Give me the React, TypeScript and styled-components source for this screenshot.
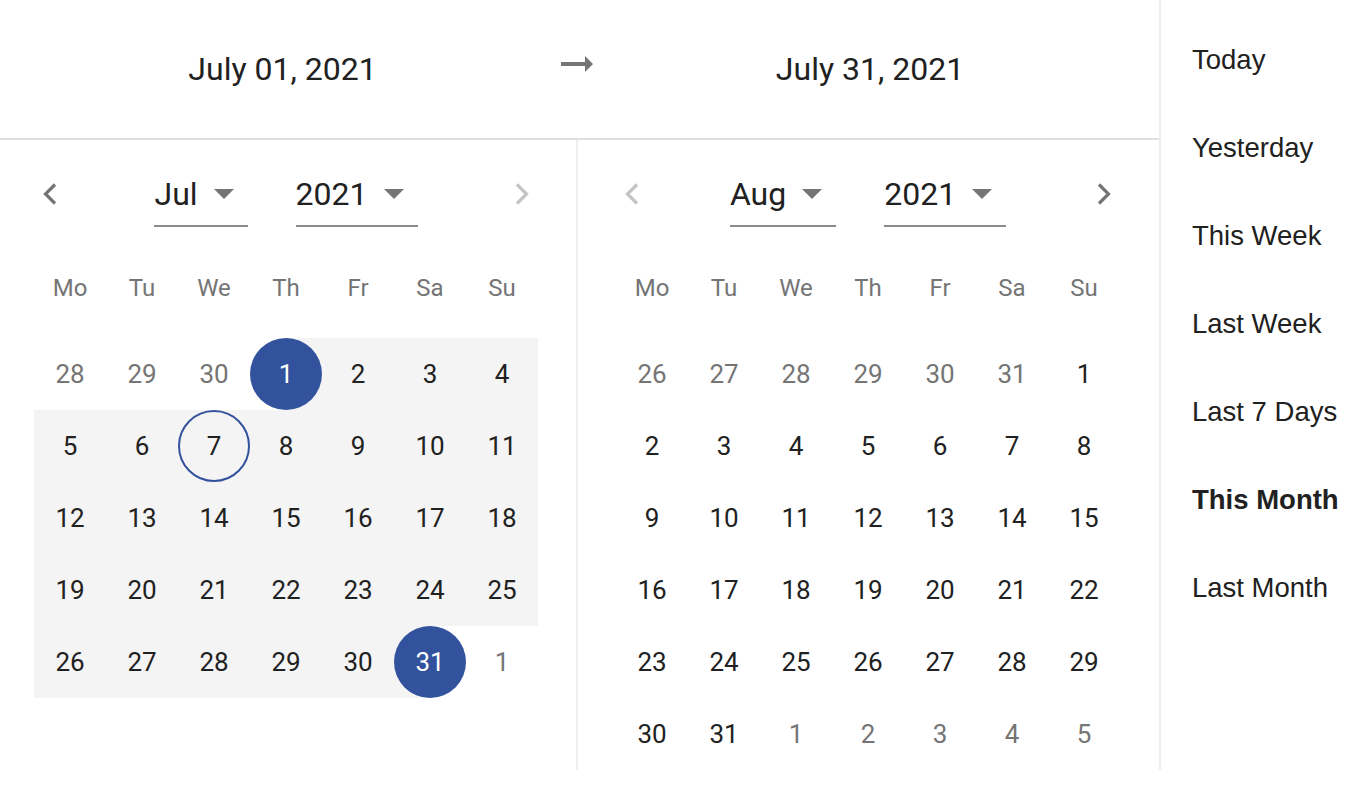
import React from 'react'
import styled, { createGlobalStyle, css } from 'styled-components'

const GlobalStyle = createGlobalStyle`
  html, body {
    margin: 0;
    padding: 0;
    background: #ffffff;
  }
  body {
    font-family: Roboto, "Noto Sans", sans-serif;
    color: #212121;
  }
`;

const BLUE = '#33529e';
const RANGE_BG = '#f4f4f4';

const Page = styled.div`
  display: flex;
  width: 1362px;
`;

const Main = styled.div`
  width: 1159px;
  display: flex;
  flex-direction: column;
`;

const Header = styled.div`
  display: grid;
  grid-template-columns: 1fr 48px 1fr;
  height: 138px;
  padding-right: 5px;
  border-bottom: 2px solid #e0e0e0;
`;

const DateLabel = styled.div<{ $side: 'start' | 'end' }>`
  display: flex;
  align-items: center;
  justify-content: center;
  font-size: 32px;
  color: #212121;
  padding-left: ${p => (p.$side === 'start' ? '12px' : '0')};
  padding-right: ${p => (p.$side === 'end' ? '15px' : '0')};
`;

const ArrowIcon = styled.svg`
  align-self: start;
  margin-top: 40px;
  width: 48px;
  height: 48px;
  fill: #757575;
`;

const Calendars = styled.div`
  display: flex;
  flex: 1;
`;

const Panel = styled.div<{ $inset: number; $divider?: boolean }>`
  display: flex;
  flex-direction: column;
  width: ${p => (p.$divider ? '578px' : 'auto')};
  flex: ${p => (p.$divider ? '0 0 auto' : '1')};
  padding-left: ${p => p.$inset}px;
  box-sizing: border-box;
  border-right: ${p => (p.$divider ? '2px solid #eeeeee' : 'none')};
`;

const NavRow = styled.div`
  width: 504px;
  margin-top: 34px;
  display: flex;
  justify-content: space-between;
  align-items: flex-start;
`;

const NavButton = styled.div<{ $disabled?: boolean }>`
  width: 32px;
  height: 40px;
  display: flex;
  align-items: center;
  justify-content: center;
  color: ${p => (p.$disabled ? '#c4c4c4' : '#757575')};
  cursor: ${p => (p.$disabled ? 'default' : 'pointer')};
`;

const SelectGroup = styled.div`
  display: flex;
  gap: 48px;
`;

const Select = styled.div`
  display: flex;
  align-items: center;
  height: 40px;
  padding-bottom: 11px;
  padding-right: 14px;
  border-bottom: 2px solid #8c8c8c;
  font-size: 32px;
  color: #212121;
`;

const Caret = styled.svg`
  width: 20px;
  height: 10px;
  margin-left: 16px;
  fill: #757575;
`;

const Grid = styled.div`
  width: 504px;
  display: grid;
  grid-template-columns: repeat(7, 72px);
`;

const WeekHeader = styled(Grid)`
  margin-top: 25px;
  margin-bottom: 14px;
`;

const WeekDay = styled.div`
  height: 72px;
  display: flex;
  align-items: center;
  justify-content: center;
  font-size: 24px;
  color: #757575;
`;

type Edge = 'start' | 'end' | 'mid' | undefined;

const Cell = styled.div<{ $range: Edge }>`
  height: 72px;
  display: flex;
  align-items: center;
  justify-content: center;
  ${p =>
    p.$range === 'mid' &&
    css`
      background: ${RANGE_BG};
    `}
  ${p =>
    p.$range === 'start' &&
    css`
      background: linear-gradient(to right, transparent 50%, ${RANGE_BG} 50%);
    `}
  ${p =>
    p.$range === 'end' &&
    css`
      background: linear-gradient(to right, ${RANGE_BG} 50%, transparent 50%);
    `}
`;

const Day = styled.div<{ $muted?: boolean; $selected?: boolean; $today?: boolean }>`
  width: 72px;
  height: 72px;
  box-sizing: border-box;
  border-radius: 50%;
  display: flex;
  align-items: center;
  justify-content: center;
  font-size: 26px;
  color: ${p => (p.$selected ? '#ffffff' : p.$muted ? '#757575' : '#212121')};
  background: ${p => (p.$selected ? BLUE : 'transparent')};
  border: ${p => (p.$today ? `2px solid ${BLUE}` : 'none')};
`;

const Sidebar = styled.div`
  width: 201px;
  border-left: 2px solid #eeeeee;
  padding-top: 16px;
  padding-left: 31px;
  box-sizing: border-box;
  font-family: "Liberation Sans", Arial, sans-serif;
`;

const Preset = styled.div<{ $active?: boolean }>`
  height: 88px;
  display: flex;
  align-items: center;
  font-size: 27.5px;
  color: #212121;
  font-weight: ${p => (p.$active ? 700 : 400)};
  white-space: nowrap;
  cursor: pointer;
`;

type DayCell = {
  day: number;
  muted?: boolean;
  selected?: boolean;
  today?: boolean;
  range?: Edge;
};

const WEEKDAYS = ['Mo', 'Tu', 'We', 'Th', 'Fr', 'Sa', 'Su'];

function buildMonth(
  year: number,
  month: number,
  opts: { rangeStart?: number; rangeEnd?: number; today?: number }
): DayCell[] {
  const first = new Date(year, month, 1);
  const offset = (first.getDay() + 6) % 7;
  const daysIn = new Date(year, month + 1, 0).getDate();
  const prevDays = new Date(year, month, 0).getDate();
  const cells: DayCell[] = [];

  for (let i = offset - 1; i >= 0; i--) {
    cells.push({ day: prevDays - i, muted: true });
  }
  for (let d = 1; d <= daysIn; d++) {
    const cell: DayCell = { day: d };
    const { rangeStart, rangeEnd } = opts;
    if (rangeStart && rangeEnd && d >= rangeStart && d <= rangeEnd) {
      cell.range = d === rangeStart ? 'start' : d === rangeEnd ? 'end' : 'mid';
      if (d === rangeStart || d === rangeEnd) cell.selected = true;
    }
    if (opts.today === d) cell.today = true;
    cells.push(cell);
  }
  let next = 1;
  while (cells.length % 7 !== 0) {
    cells.push({ day: next++, muted: true });
  }
  return cells;
}

function ChevronIcon({ dir }: { dir: 'left' | 'right' }) {
  return (
    <svg width="16" height="24" viewBox="0 0 16 24" fill="none">
      <polyline
        points={dir === 'left' ? '13,2.5 3.5,12 13,21.5' : '3,2.5 12.5,12 3,21.5'}
        stroke="currentColor"
        strokeWidth="3.2"
      />
    </svg>
  );
}

function Dropdown({ label }: { label: string }) {
  return (
    <Select>
      {label}
      <Caret viewBox="0 0 20 10">
        <path d="M0 0 L10 10 L20 0 Z" />
      </Caret>
    </Select>
  );
}

type MonthProps = {
  month: string;
  year: string;
  cells: DayCell[];
  prevDisabled?: boolean;
  nextDisabled?: boolean;
  inset: number;
  divider?: boolean;
};

function MonthPanel({ month, year, cells, prevDisabled, nextDisabled, inset, divider }: MonthProps) {
  return (
    <Panel $inset={inset} $divider={divider}>
      <NavRow>
        <NavButton $disabled={prevDisabled}>
          <ChevronIcon dir="left" />
        </NavButton>
        <SelectGroup>
          <Dropdown label={month} />
          <Dropdown label={year} />
        </SelectGroup>
        <NavButton $disabled={nextDisabled}>
          <ChevronIcon dir="right" />
        </NavButton>
      </NavRow>
      <WeekHeader>
        {WEEKDAYS.map(w => (
          <WeekDay key={w}>{w}</WeekDay>
        ))}
      </WeekHeader>
      <Grid>
        {cells.map((c, i) => (
          <Cell key={i} $range={c.range}>
            <Day $muted={c.muted} $selected={c.selected} $today={c.today}>
              {c.day}
            </Day>
          </Cell>
        ))}
      </Grid>
    </Panel>
  );
}

const PRESETS = ['Today', 'Yesterday', 'This Week', 'Last Week', 'Last 7 Days', 'This Month', 'Last Month'];

export default function App() {
  const july = buildMonth(2021, 6, { rangeStart: 1, rangeEnd: 31, today: 7 });
  const august = buildMonth(2021, 7, {});

  return (
    <>
      <GlobalStyle />
      <Page>
        <Main>
          <Header>
            <DateLabel $side="start">July 01, 2021</DateLabel>
            <ArrowIcon viewBox="0 0 24 24">
              <path d="M16.01 11H4v2h12.01v3L20 12l-3.99-4z" />
            </ArrowIcon>
            <DateLabel $side="end">July 31, 2021</DateLabel>
          </Header>
          <Calendars>
            <MonthPanel month="Jul" year="2021" cells={july} nextDisabled inset={34} divider />
            <MonthPanel month="Aug" year="2021" cells={august} prevDisabled inset={38} />
          </Calendars>
        </Main>
        <Sidebar>
          {PRESETS.map(p => (
            <Preset key={p} $active={p === 'This Month'}>
              {p}
            </Preset>
          ))}
        </Sidebar>
      </Page>
    </>
  );
}
